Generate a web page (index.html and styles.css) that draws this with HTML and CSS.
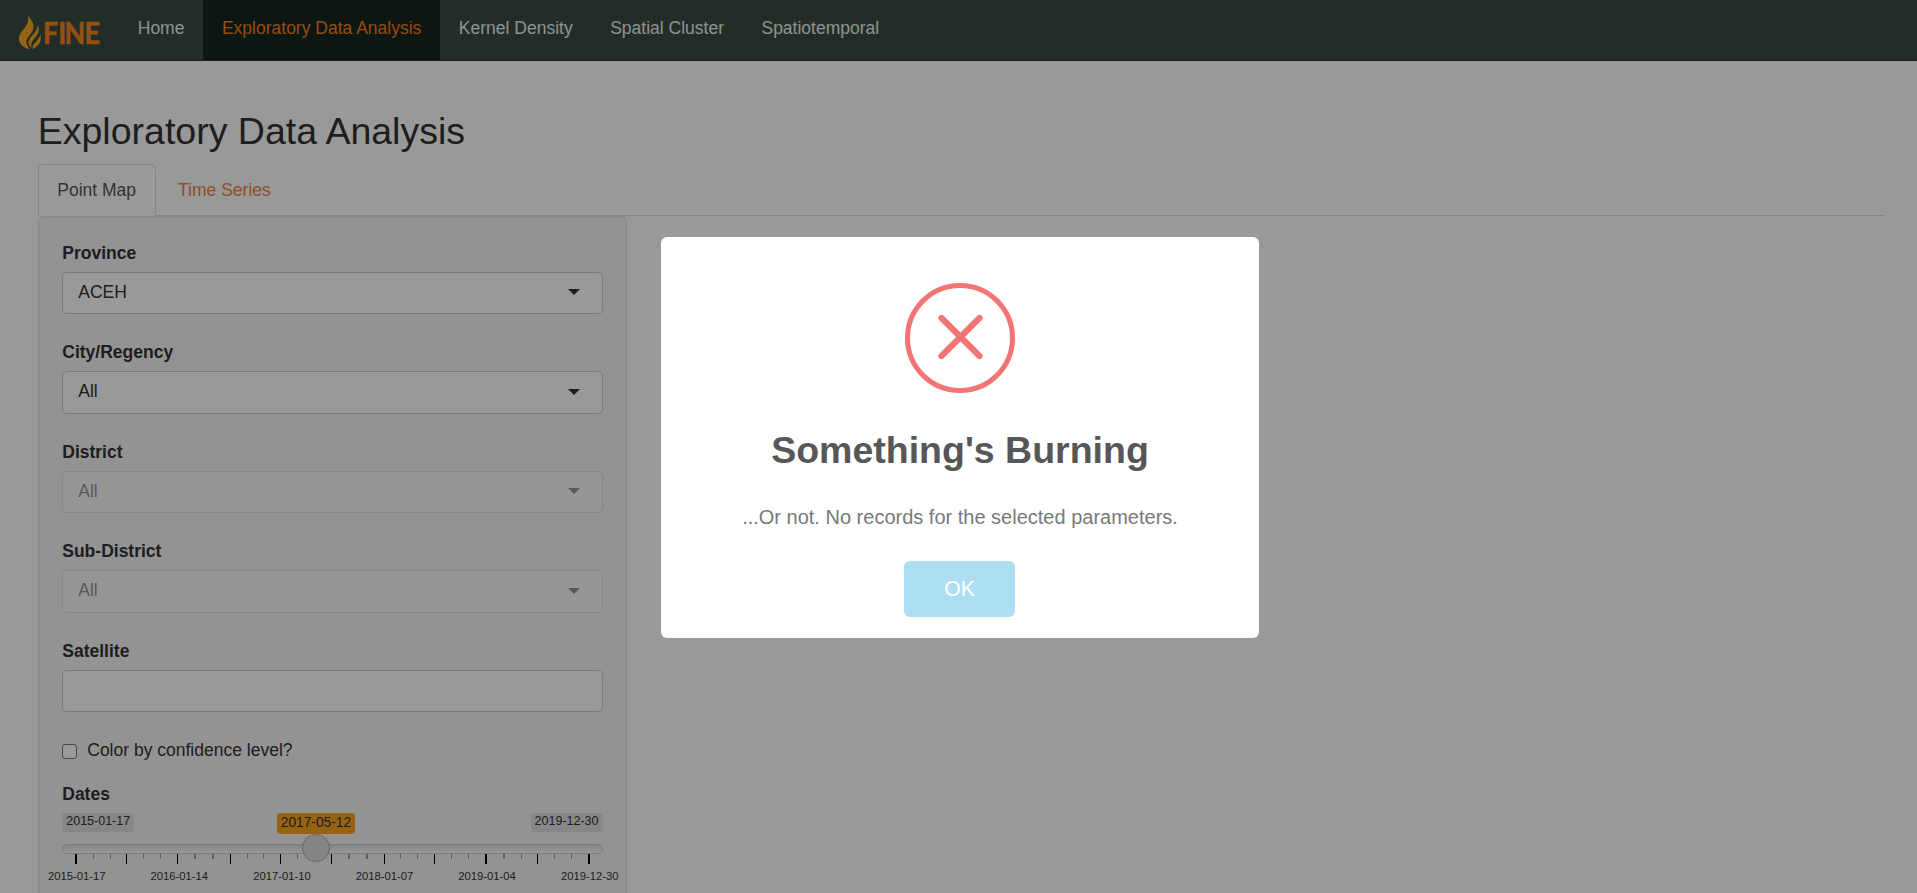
FILE: index.html
```html
<!DOCTYPE html>
<html lang="en">
<head>
<meta charset="utf-8">
<title>FINE</title>
<link rel="stylesheet" href="styles.css">
</head>
<body>
<nav class="navbar">
  <a class="brand">
    <svg width="100" height="46" viewBox="0 0 100 46">
      <path class="flame" d="M10 4 C15 9 17 14 14.500 19 C12.500 23 8.500 25 8.500 30 C8.500 33 10 35.500 12.500 37 C6 36.500 1 32 1 26.500 C1 19 12 15 10 4 Z"/>
      <path class="flame" d="M19.500 13 C22 18 20.500 21.500 17.500 25 C14.500 28.500 12.500 31 13.500 36 C10.500 33.500 9.500 30.500 11.500 27 C14 22.500 19.500 20 19.500 13 Z"/>
      <path class="flame" d="M22.500 22.500 C23.500 28 22.500 33.500 14.500 37 C13.500 31.500 21.500 28.500 22.500 22.500 Z"/>
      <text class="wordmark" transform="translate(25 31.500) scale(.9 1)" x="0 17 24 46.200" y="0">FINE</text>
    </svg>
  </a>
  <a class="nav-link">Home</a>
  <a class="nav-link active">Exploratory Data Analysis</a>
  <a class="nav-link">Kernel Density</a>
  <a class="nav-link">Spatial Cluster</a>
  <a class="nav-link">Spatiotemporal</a>
</nav>

<main class="content">
  <h2 class="title">Exploratory Data Analysis</h2>
  <div class="tabs">
    <a class="tab active">Point Map</a>
    <a class="tab">Time Series</a>
  </div>
  <section class="well">
    <div class="group"><label class="label">Province</label><div class="select">ACEH<i class="caret"></i></div></div>
    <div class="group"><label class="label">City/Regency</label><div class="select">All<i class="caret"></i></div></div>
    <div class="group"><label class="label">District</label><div class="select disabled">All<i class="caret"></i></div></div>
    <div class="group"><label class="label">Sub-District</label><div class="select disabled">All<i class="caret"></i></div></div>
    <div class="group"><label class="label">Satellite</label><div class="select"></div></div>
    <div class="check"><span class="box"></span>Color by confidence level?</div>
    <label class="label">Dates</label>
    <div class="slider">
      <div class="bounds"><span class="bound">2015-01-17</span><span class="bound">2019-12-30</span></div>
      <span class="value">2017-05-12</span>
      <div class="track"></div>
      <span class="handle"></span>
      <div class="ticks">
        <i class="big bold"></i><i></i><i></i><i class="big"></i><i></i><i></i><i class="big"></i><i class="bold"></i><i class="bold"></i><i class="big"></i><i></i><i></i><i class="big"></i><i></i><i></i><i class="big"></i><i class="bold"></i><i class="bold"></i><i class="big"></i><i></i><i></i><i class="big"></i><i></i><i></i><i class="big bold"></i><i class="bold"></i><i></i><i class="big"></i><i></i><i></i><i class="big bold"></i>
      </div>
      <div class="dates"><span>2015-01-17</span><span>2016-01-14</span><span>2017-01-10</span><span>2018-01-07</span><span>2019-01-04</span><span>2019-12-30</span></div>
    </div>
  </section>
</main>

<div class="overlay">
  <div class="modal">
    <svg class="error" width="110" height="110" viewBox="0 0 110 110">
      <circle cx="55" cy="55" r="52.500"/>
      <path d="M36.500 35 L74.500 73 M74.500 35 L36.500 73"/>
    </svg>
    <h2 class="modal-title">Something's Burning</h2>
    <p class="modal-text">...Or not. No records for the selected parameters.</p>
    <button class="ok">OK</button>
  </div>
</div>
</body>
</html>
```
FILE: styles.css
```css
* { box-sizing: border-box; }
html, body { height: 100%; }
body {
  margin: 0;
  overflow: hidden;
  background: #fff;
  color: #333;
  font: 17.5px/25px "Liberation Sans", Arial, sans-serif;
}
.navbar {
  display: flex;
  height: 61px;
  background: #394b44;
  border-bottom: 1px solid #2a3732;
}
.brand { width: 119px; padding: 12px 0 0 18px; }
.brand svg { display: block; }
.flame { fill: #fba51f; }
.wordmark { fill: #f5861f; stroke: #f5861f; stroke-width: .6; font: 700 30px/1 Lato, sans-serif; }
.nav-link { padding: 15.5px 18.75px 0; color: #f0f0f0; white-space: nowrap; }
.nav-link.active { background: #14251e; color: #f4801a; }

.content { padding: 50px 33.5px 0 37.75px; }
.title { margin: 0 0 11.75px; font-size: 37.5px; line-height: 41.25px; font-weight: 400; }
.tabs { display: flex; gap: 3px; height: 52px; border-bottom: 1px solid #ddd; }
.tab {
  height: 52px;
  padding: 13px 18.5px 12px;
  border: 1px solid transparent;
  border-radius: 5px 5px 0 0;
  color: #f08040;
}
.tab.active { color: #555; background: #fff; border-color: #ddd #ddd #fff; }

.well {
  width: 589px;
  height: 720px;
  padding: 23.65px 23.25px 0 23.5px;
  background: #f5f5f5;
  border: 1px solid #e3e3e3;
  border-radius: 5px;
  box-shadow: inset 0 1px 1px rgba(0, 0, 0, .05);
}
.group { margin-bottom: 26px; }
.label { display: block; margin-bottom: 6.25px; font-weight: 700; }
.select {
  display: flex;
  align-items: center;
  justify-content: space-between;
  height: 42.25px;
  padding: 0 22px 1.5px 15px;
  background: #fff;
  border: 1px solid #ccc;
  border-radius: 5px;
}
.select.disabled { opacity: .5; }
.caret { border: 6px solid transparent; border-top: 6.25px solid #333; border-bottom: 0; }
.check { display: flex; align-items: center; gap: 10px; height: 25px; margin-bottom: 18.5px; }
.box { width: 15px; height: 15px; margin-top: 1.5px; border: 1px solid #767676; border-radius: 3px; background: #fff; }

.slider { position: relative; height: 90px; }
.bounds { display: flex; justify-content: space-between; }
.bound {
  height: 19px;
  padding: 0 4px;
  border-radius: 4px;
  background: #e1e1e1;
  color: #333;
  font-size: 12.5px;
  line-height: 17px;
}
.value {
  position: absolute;
  left: 214.5px;
  top: 0;
  height: 21px;
  padding: 0 4px;
  border-radius: 4px;
  background: #fba51f;
  font-size: 13.75px;
  line-height: 19px;
}
.track {
  height: 10px;
  margin-top: 12px;
  border: 1px solid #ccc;
  border-radius: 10px;
  background: linear-gradient(#dedede, #fff);
}
.handle {
  position: absolute;
  left: 239.5px;
  top: 21px;
  width: 28px;
  height: 28px;
  border: 1px solid #ababab;
  border-radius: 50%;
  background: #dedede;
}
.ticks { display: flex; justify-content: space-between; margin: 0 12.5px; height: 10px; }
.ticks i { width: 1px; height: 5px; background: #999; }
.ticks .big { height: 10px; background: #000; }
.ticks .bold { width: 2px; }
.dates {
  display: flex;
  justify-content: space-between;
  margin: 5px -16px 0 -14.25px;
  font-size: 11.25px;
  line-height: 15px;
}

.overlay {
  position: fixed;
  inset: 0;
  display: flex;
  justify-content: center;
  padding: 237px 0 0 3px;
  background: rgba(0, 0, 0, .4);
}
.modal {
  display: flex;
  flex-direction: column;
  align-items: center;
  width: 598px;
  height: 401px;
  padding-top: 46px;
  border-radius: 6px;
  background: #fff;
}
.error { fill: none; stroke: #f27474; stroke-width: 5; }
.error path { stroke-width: 6.25; stroke-linecap: round; }
.modal-title { margin: 32px 0 0; color: #575757; font-size: 37.5px; line-height: 50px; font-weight: 700; }
.modal-text { margin: 29px 0 0; color: #797979; font-size: 20px; line-height: 26px; }
.ok {
  width: 111px;
  height: 56px;
  margin: 31px 1px 0 0;
  padding: 0;
  border: 0;
  border-radius: 6px;
  background: #aedef4;
  color: #fff;
  font: 21.25px "Liberation Sans", Arial, sans-serif;
}
```
